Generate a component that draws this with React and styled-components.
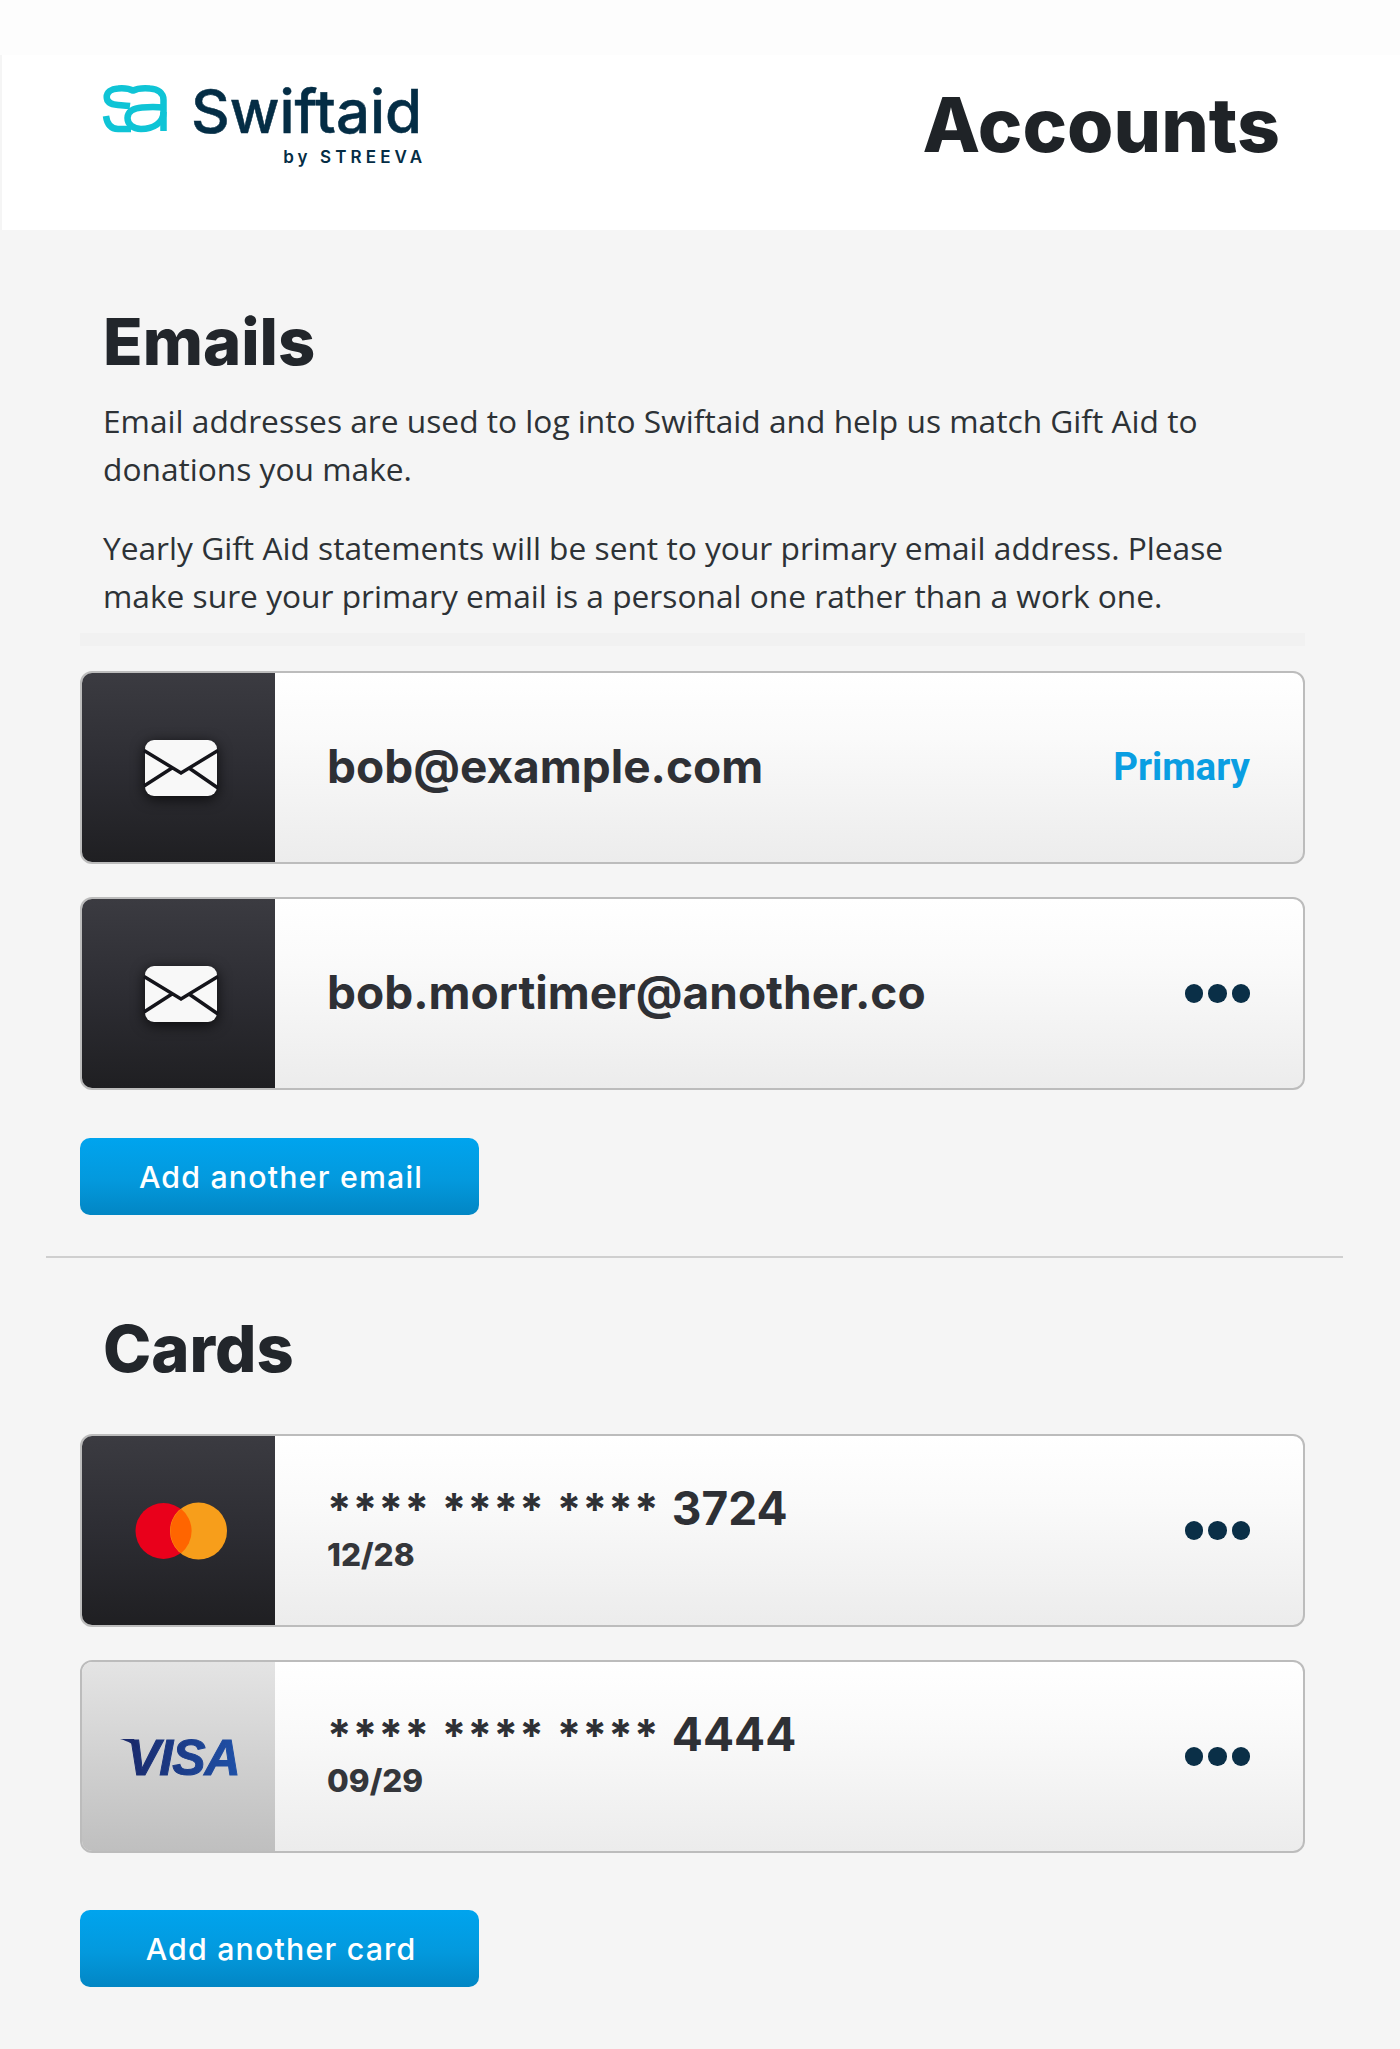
import React from 'react';
import styled, { createGlobalStyle } from 'styled-components';

const Global = createGlobalStyle`
  html, body { margin: 0; padding: 0; background: #f5f5f5; }
  * { box-sizing: border-box; }
`;

const Page = styled.div`
  width: 1400px;
  height: 2049px;
  overflow: hidden;
  background: #f5f5f5;
  font-family: "Open Sans", sans-serif;
  color: #22262b;
`;

const TopBand = styled.div`
  height: 55px;
  background: #fdfdfd;
`;

const Header = styled.header`
  height: 175px;
  margin-left: 2px;
  background: #fff;
  display: flex;
  justify-content: space-between;
  padding: 29px 120px 0 101px;
`;

const Logo = styled.div`
  display: flex;
  gap: 24px;
  align-items: flex-start;
`;

const LogoWords = styled.div`
  display: flex;
  flex-direction: column;
  align-items: flex-end;
  color: #042d45;
  font-family: Inter, sans-serif;
`;

const LogoName = styled.div`
  font-size: 60px;
  font-weight: 500;
  line-height: 54px;
  -webkit-text-stroke: 0.5px #042d45;
`;

const LogoBy = styled.div`
  font-size: 17px;
  font-weight: 600;
  letter-spacing: 4.1px;
  margin-top: 9px;
  margin-right: -4px;
`;

const PageTitle = styled.h1`
  margin: 0;
  font-family: Inter, sans-serif;
  font-size: 75px;
  font-weight: 800;
  line-height: 82px;
  color: #1f2327;
`;

const Main = styled.main`
  padding: 0 57px 0 46px;
`;

const Section = styled.section`
  padding: 0 38px 0 34px;
`;

const Heading = styled.h2`
  margin: ${p => p.$top}px 0 0;
  padding-left: 23px;
  font-family: Inter, sans-serif;
  font-size: 65px;
  font-weight: 800;
  line-height: 72px;
  color: #22262b;
`;

const Copy = styled.p`
  margin: ${p => p.$top}px 0 0;
  padding: 0 24px 0 23px;
  font-size: 31.7px;
  line-height: 47.5px;
  color: #2d3236;
`;

const FaintBand = styled.div`
  height: 13px;
  margin-top: 14px;
  background: #f1f1f1;
`;

const Rows = styled.div`
  display: flex;
  flex-direction: column;
  gap: 33px;
  margin-top: ${p => p.$top}px;
`;

const Row = styled.div`
  height: 193px;
  display: flex;
  align-items: stretch;
  border: 2px solid #bcbcbc;
  border-radius: 12px;
  overflow: hidden;
  background: linear-gradient(180deg, #ffffff 0%, #fafafa 35%, #ececec 100%);
`;

const Badge = styled.div`
  width: 193px;
  flex: none;
  display: flex;
  align-items: center;
  justify-content: center;
  background: ${p => p.$light
    ? 'linear-gradient(180deg, #e4e4e4 0%, #bfbfbf 100%)'
    : 'linear-gradient(180deg, #3b3b41 0%, #2d2d33 50%, #1f1f22 100%)'};
`;

const RowBody = styled.div`
  flex: 1;
  display: flex;
  align-items: center;
  justify-content: space-between;
  padding: 0 53px 0 52px;
`;

const Address = styled.div`
  padding-bottom: 4px;
  font-family: Inter, sans-serif;
  font-size: 46px;
  font-weight: 700;
  color: #2e3035;
`;

const Primary = styled.div`
  padding-bottom: 2px;
  font-family: Roboto, sans-serif;
  font-size: 38.5px;
  font-weight: 700;
  color: #0a9ee2;
`;

const Dots = styled.div`
  display: flex;
  gap: 5px;
`;

const Dot = styled.span`
  width: 18.5px;
  height: 18.5px;
  border-radius: 50%;
  background: #0a2f47;
`;

const CardInfo = styled.div`
  display: flex;
  flex-direction: column;
  margin-top: -7px;
`;

const CardNumber = styled.div`
  display: flex;
  align-items: baseline;
  gap: 12px;
  font-family: Inter, sans-serif;
  font-size: 46px;
  font-weight: 700;
  line-height: 56px;
  color: #2e3035;
`;

const Stars = styled.span`
  font-size: 44px;
  letter-spacing: 1.2px;
`;

const Expiry = styled.div`
  font-family: Inter, sans-serif;
  font-size: 31.5px;
  font-weight: 800;
  line-height: 38px;
  margin-top: -1px;
  color: #34363a;
`;

const AddButton = styled.button`
  display: block;
  width: 399px;
  height: 77px;
  margin-top: ${p => p.$top}px;
  padding: 0 0 0 3px;
  border: 0;
  border-radius: 10px;
  background: linear-gradient(180deg, #00a4ee 0%, #0399dd 55%, #0286c4 100%);
  color: #fff;
  font-family: Inter, sans-serif;
  font-size: 30.3px;
  font-weight: 500;
  letter-spacing: 1.2px;
`;

const Divider = styled.hr`
  margin: 41px 0 0;
  border: 0;
  height: 2px;
  background: #cfcfcf;
`;

const VisaText = styled.text`
  font-family: "Liberation Sans", sans-serif;
  font-size: 50px;
  font-weight: 700;
  font-style: italic;
  letter-spacing: -1px;
`;

const IconSvg = styled.svg`
  display: block;
  overflow: visible;
`;

const LogoMark = () => (
  <IconSvg width="64" height="48" viewBox="0 0 64 48" style={{ marginTop: 1 }}>
    <g fill="none" stroke="#0fc4d6" strokeWidth="6.500">
      <path d="M31 6C26 3.500 20 3 15 3.500C8 4 3.700 7 3.700 12C3.700 17 8 19.500 15 20C19 20.300 23 20.500 27 21" />
      <path d="M3 31C4 39 8 44 15 44H28" />
      <path d="M29 6C35 3 42 3 47 3.500C55 4 60.500 8 60.500 15V46" />
      <path d="M60.500 22.500C54 22 46 22 39 22.500C30 23 24.500 27 24.500 33C24.500 39 30 44 38 44C50 44 60.500 38 60.500 27" />
    </g>
  </IconSvg>
);

const MailIcon = () => (
  <IconSvg width="72" height="56" viewBox="0 0 72 56" style={{ filter: 'drop-shadow(0 3px 7px rgba(0,0,0,.75))', marginLeft: 4 }}>
    <rect width="72" height="56" rx="9" fill="#f8f8f8" />
    <path d="M-1 10.500L36 33L73 10.500M-1 46L27 28M73 48L44 28" fill="none" stroke="#14141a" strokeWidth="3.500" />
  </IconSvg>
);

const MastercardIcon = () => (
  <IconSvg width="92" height="58" viewBox="0 0 92 58" style={{ marginLeft: 4 }}>
    <circle cx="28.500" cy="29" r="28" fill="#e9001b" />
    <circle cx="63.500" cy="29" r="28.500" fill="#f79e1b" />
    <path d="M46 6.800A28.500 28.500 0 0 1 46 51.200A28.500 28.500 0 0 1 46 6.800Z" fill="#ff6500" />
  </IconSvg>
);

const VisaIcon = () => (
  <IconSvg width="116" height="44" viewBox="0 0 116 44" style={{ marginLeft: -2 }}>
    <defs>
      <linearGradient id="visaFill" x1="0" x2="1" y1="0" y2="0">
        <stop offset="0" stopColor="#1a2a6c" />
        <stop offset="1" stopColor="#1f51a8" />
      </linearGradient>
    </defs>
    <VisaText x="7" y="40" fill="url(#visaFill)" stroke="url(#visaFill)" strokeWidth="1">VISA</VisaText>
    <path d="M0 4H14L20 16C15 10 8 6 0 4Z" fill="#1a2a6c" />
  </IconSvg>
);

const MoreDots = () => (
  <Dots>
    <Dot />
    <Dot />
    <Dot />
  </Dots>
);

const emails = [
  { address: 'bob@example.com', primary: true },
  { address: 'bob.mortimer@another.co', primary: false },
];

const cards = [
  { last: '3724', expiry: '12/28', icon: <MastercardIcon />, light: false },
  { last: '4444', expiry: '09/29', icon: <VisaIcon />, light: true },
];

export default function App() {
  return (
    <Page>
      <Global />
      <TopBand />
      <Header>
        <Logo>
          <LogoMark />
          <LogoWords>
            <LogoName>Swiftaid</LogoName>
            <LogoBy>by STREEVA</LogoBy>
          </LogoWords>
        </Logo>
        <PageTitle>Accounts</PageTitle>
      </Header>
      <Main>
        <Section>
          <Heading $top={76}>Emails</Heading>
          <Copy $top={19}>
            Email addresses are used to log into Swiftaid and help us match Gift Aid to donations you make.
          </Copy>
          <Copy $top={32}>
            Yearly Gift Aid statements will be sent to your primary email address. Please make sure your primary email is a personal one rather than a work one.
          </Copy>
          <FaintBand />
          <Rows $top={25}>
            {emails.map(item => (
              <Row key={item.address}>
                <Badge><MailIcon /></Badge>
                <RowBody>
                  <Address>{item.address}</Address>
                  {item.primary ? <Primary>Primary</Primary> : <MoreDots />}
                </RowBody>
              </Row>
            ))}
          </Rows>
          <AddButton $top={48}>Add another email</AddButton>
        </Section>
        <Divider />
        <Section>
          <Heading $top={55}>Cards</Heading>
          <Rows $top={49}>
            {cards.map(card => (
              <Row key={card.last}>
                <Badge $light={card.light}>{card.icon}</Badge>
                <RowBody>
                  <CardInfo>
                    <CardNumber>
                      <Stars>**** **** ****</Stars>
                      {card.last}
                    </CardNumber>
                    <Expiry>{card.expiry}</Expiry>
                  </CardInfo>
                  <MoreDots />
                </RowBody>
              </Row>
            ))}
          </Rows>
          <AddButton $top={57}>Add another card</AddButton>
        </Section>
      </Main>
    </Page>
  );
}
